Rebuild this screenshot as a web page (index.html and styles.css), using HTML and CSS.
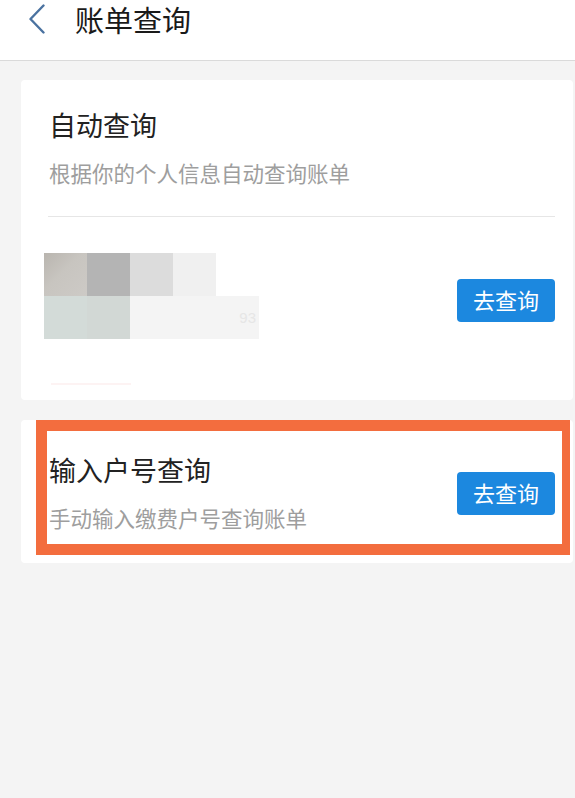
FILE: index.html
```html
<!DOCTYPE html>
<html lang="zh-CN">
<head>
<meta charset="utf-8">
<title>账单查询</title>
<link rel="stylesheet" href="styles.css">
</head>
<body>
<header class="topbar">
  <svg class="back" width="18" height="30" viewBox="0 0 18 30" aria-hidden="true">
    <polyline points="15.5,1.5 2.5,15 15.5,28.5" fill="none" stroke="#4a72a0" stroke-width="2.4" stroke-linecap="round" stroke-linejoin="round"/>
  </svg>
  <h1 class="topbar-title">账单查询</h1>
</header>
<main class="page">
  <section class="card card-auto">
    <h2 class="card-title">自动查询</h2>
    <p class="card-desc">根据你的个人信息自动查询账单</p>
    <div class="divider"></div>
    <div class="account-row">
      <div class="blurred">
        <div class="px px-a"></div>
        <div class="px px-b"></div>
        <div class="px px-c"></div>
        <div class="px px-d"></div>
        <div class="px px-empty"></div>
        <div class="px px-e"></div>
        <div class="px px-f"></div>
        <div class="px px-g"></div>
        <div class="px px-g"></div>
        <div class="px px-g px-num">93</div>
      </div>
      <button class="btn btn-auto">去查询</button>
    </div>
    <div class="faint-line"></div>
  </section>
  <section class="card card-manual">
    <div class="manual-text">
      <h2 class="card-title">输入户号查询</h2>
      <p class="card-desc">手动输入缴费户号查询账单</p>
    </div>
    <button class="btn">去查询</button>
    <div class="highlight"></div>
  </section>
</main>
</body>
</html>
```

FILE: styles.css
```css
* { box-sizing: border-box; }
html, body {
  margin: 0;
  padding: 0;
}
body {
  width: 575px;
  height: 798px;
  background: #f4f4f4;
  font-family: "Noto Sans CJK SC", "Noto Sans", sans-serif;
  overflow: hidden;
}
.topbar {
  height: 61px;
  background: #ffffff;
  border-bottom: 1px solid #dadada;
  display: flex;
  align-items: flex-start;
  padding: 0 0 0 28px;
}
.back {
  display: block;
  margin-top: 4px;
}
.topbar-title {
  margin: 0 0 0 29px;
  font-size: 29px;
  line-height: 39px;
  font-weight: 400;
  color: #1a1a1a;
}
.page {
  padding: 19px 2px 0 21px;
  display: flex;
  flex-direction: column;
  gap: 20px;
}
.card {
  background: #ffffff;
  border-radius: 4px;
  position: relative;
}
.card-auto {
  height: 320px;
  padding: 27px 18px 0 28px;
}
.card-title {
  margin: 0;
  font-size: 27px;
  line-height: 36px;
  font-weight: 400;
  color: #222222;
}
.card-desc {
  margin: 15px 0 0 0;
  font-size: 21.5px;
  line-height: 30px;
  color: #9e9e9e;
}
.divider {
  height: 1px;
  background: #e6e6e6;
  margin-top: 28px;
  margin-left: -1px;
}
.account-row {
  display: flex;
  justify-content: space-between;
  align-items: flex-start;
  padding-top: 36px;
}
.blurred {
  display: grid;
  grid-template-columns: repeat(5, 43px);
  grid-template-rows: 43px 43px;
  margin-left: -5px;
}
.px { width: 43px; height: 43px; }
.px-a { background: linear-gradient(135deg, #b9b5af 0%, #c8c5c0 45%, #cdcac6 100%); }
.px-b { background: #b4b4b4; }
.px-c { background: #dcdcdc; }
.px-d { background: #f0f0f0; }
.px-empty { background: #ffffff; }
.px-e { background: #d3dbd8; }
.px-f { background: #d2d8d5; }
.px-g { background: #f4f4f4; }
.px-num {
  color: #e6e6e6;
  font-family: "Liberation Sans", sans-serif;
  font-size: 15px;
  line-height: 43px;
  text-align: right;
  padding-right: 3px;
}
.btn {
  width: 98px;
  height: 43px;
  border: none;
  border-radius: 4px;
  background: #1c88df;
  color: #ffffff;
  font-family: "Noto Sans CJK SC", "Noto Sans", sans-serif;
  font-size: 22px;
  line-height: 41px;
  padding: 0 0 2px 0;
}
.btn-auto {
  margin-top: 26px;
}
.faint-line {
  width: 80px;
  height: 2px;
  background: #fdf3f3;
  margin-top: 44px;
  margin-left: 2px;
}
.card-manual {
  height: 143px;
  padding: 32px 18px 0 28px;
  display: flex;
  justify-content: space-between;
  align-items: flex-start;
}
.card-manual .btn {
  margin-top: 20px;
}
.highlight {
  position: absolute;
  left: 15px;
  top: 0;
  width: 534px;
  height: 135px;
  border-style: solid;
  border-color: #f36d3e;
  border-width: 11px 8px 11px 11px;
  pointer-events: none;
}
```
